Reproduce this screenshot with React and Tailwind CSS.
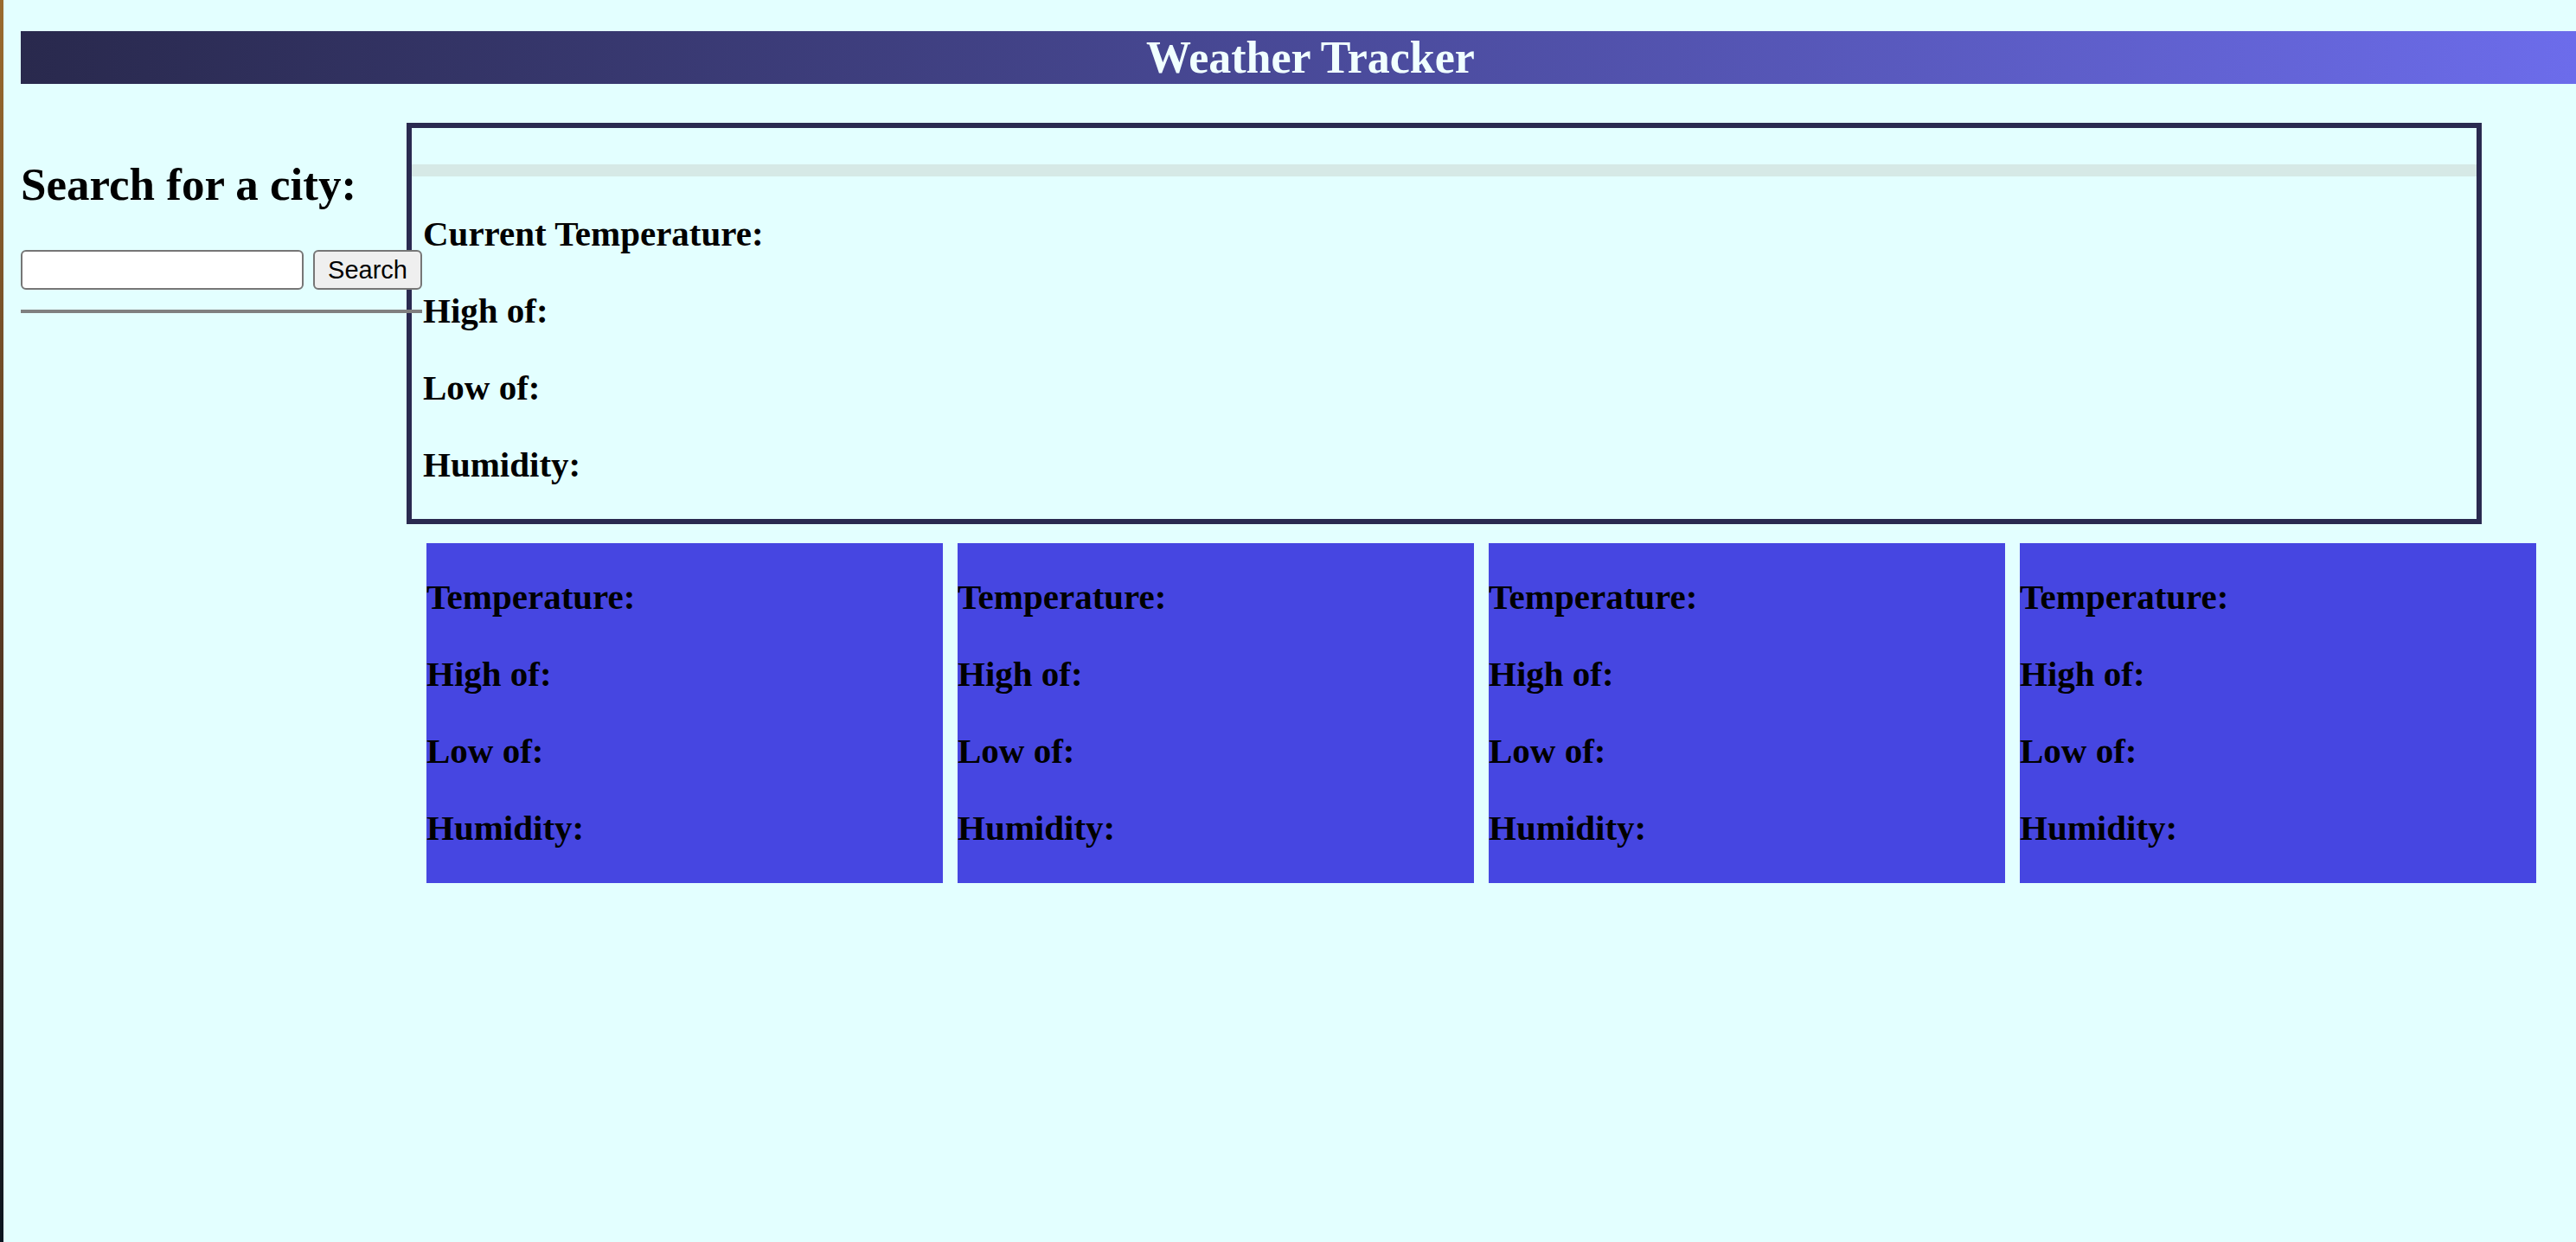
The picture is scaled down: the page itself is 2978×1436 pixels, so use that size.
import { useState } from 'react';

const serif = "font-['Liberation_Serif',serif]";

const ForecastCard = () => (
  <div className={`h-[393px] bg-[#4646e1] pt-[40px] flex flex-col gap-[44px] ${serif} font-bold text-[41px] leading-[45px] text-black`}>
    <p>Temperature:</p>
    <p>High of:</p>
    <p>Low of:</p>
    <p>Humidity:</p>
  </div>
);

const App = () => {
  const [city, setCity] = useState('');

  return (
    <div className="flex min-h-screen bg-[#e3ffff] overflow-hidden">
      {/* window edge */}
      <div className="w-[4px] shrink-0 bg-gradient-to-b from-[#9a6b2e] via-[#5a3a22] to-[#0b1520]" />

      <div className="flex-1 min-w-0 pl-[20px] pt-[36px]">
        {/* Header */}
        <header
          className={`h-[61px] pt-[2px] pl-[28px] text-center bg-gradient-to-r from-[#29294d] to-[#6c6ceb] text-[#f0ffff] ${serif} font-bold text-[52px] leading-[58px]`}
        >
          Weather Tracker
        </header>

        <div className="flex items-start mt-[45px]">
          {/* Search */}
          <aside className="relative z-10 w-[464px] shrink-0 pt-[42px]">
            <h2 className={`${serif} font-bold text-[53px] leading-[59px] text-black whitespace-nowrap`}>
              Search for a city:
            </h2>
            <div className="flex gap-[11px] mt-[46px]">
              <input
                type="text"
                value={city}
                onChange={(e) => setCity(e.target.value)}
                className="w-[327px] h-[46px] bg-white border-2 border-[#767676] rounded-[6px] px-2 text-[28px]"
              />
              <button className="w-[126px] h-[46px] bg-[#efefef] border-2 border-[#767676] rounded-[6px] font-['Liberation_Sans',sans-serif] text-[29px] leading-none text-black">
                Search
              </button>
            </div>
            <div className="h-[4px] bg-[#808080] mt-[23px]" />
          </aside>

          <main className="flex-1 -ml-[18px]">
            {/* Current weather */}
            <section className="w-[2399px] border-[6px] border-[#2a2a50] pt-[42px] pb-[40px]">
              <div className="h-[14px] bg-[#d6e9e6]" />
              <div className={`mt-[44px] pl-[13px] flex flex-col gap-[44px] ${serif} font-bold text-[41px] leading-[45px] text-black`}>
                <p>Current Temperature:</p>
                <p>High of:</p>
                <p>Low of:</p>
                <p>Humidity:</p>
              </div>
            </section>

            {/* 4 day forecast */}
            <div className="grid grid-cols-4 gap-[17px] mt-[22px] ml-[23px] w-[2439px]">
              <ForecastCard />
              <ForecastCard />
              <ForecastCard />
              <ForecastCard />
            </div>
          </main>
        </div>
      </div>
    </div>
  );
};

export default App;
